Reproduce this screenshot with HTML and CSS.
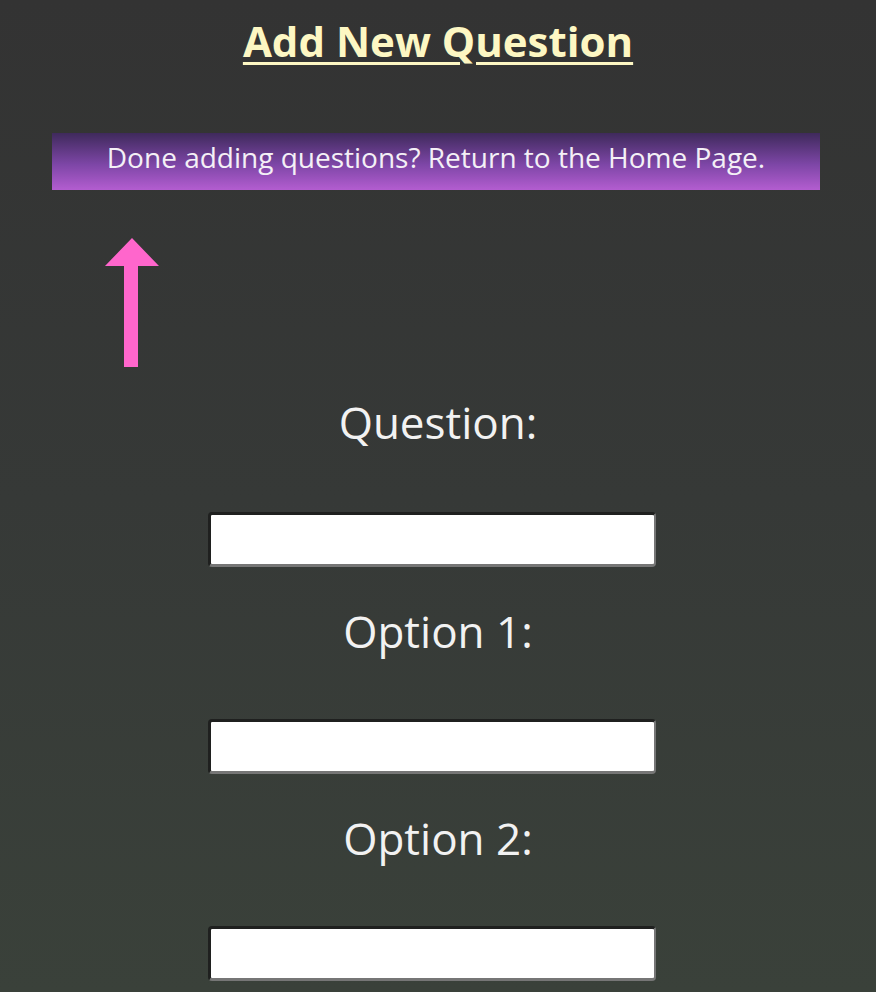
FILE: index.html
```html
<!DOCTYPE html>
<html>
<head>
<meta charset="utf-8">
<link rel="stylesheet" href="styles.css">
</head>
<body>
<h1 class="title">Add New Question</h1>
<div class="banner">Done adding questions? Return to the Home Page.</div>
<div class="arrow-wrap">
<svg class="arrow" width="56" height="130" viewBox="0 0 56 130"><polygon points="28,0 55,28 34,28 34,129 20,129 20,28 1,28" fill="#ff66cc"/></svg>
</div>
<form class="form">
<label class="label first">Question:</label>
<input class="field" type="text">
<label class="label">Option 1:</label>
<input class="field" type="text">
<label class="label">Option 2:</label>
<input class="field" type="text">
</form>
</body>
</html>
```
FILE: styles.css
```css
html, body {
  margin: 0;
  padding: 0;
}
body {
  min-height: 992px;
  background: linear-gradient(to bottom, #333333 0%, #363937 50%, #3a413a 100%);
  font-family: "Open Sans", sans-serif;
  color: #f2f2f2;
  overflow: hidden;
}
.title {
  margin: 0;
  padding-top: 16px;
  text-align: center;
  font-size: 42px;
  line-height: 50px;
  font-weight: 700;
  color: #fdf7c3;
  text-decoration: underline;
  text-decoration-thickness: 3px;
  text-underline-offset: 5px;
}
.banner {
  margin: 67px 56px 0 52px;
  height: 57px;
  padding-bottom: 10px;
  box-sizing: border-box;
  display: flex;
  align-items: center;
  justify-content: center;
  background: linear-gradient(to bottom, #3f2a5c 0%, #7d46a6 55%, #b35dd0 100%);
  font-size: 28px;
  color: #f4f0f6;
}
.arrow-wrap {
  margin: 48px 0 0 104px;
  height: 130px;
}
.arrow {
  display: block;
}
.form {
  display: flex;
  flex-direction: column;
  align-items: center;
}
.label {
  display: block;
  font-size: 44px;
  line-height: 60px;
  margin-top: 34px;
  margin-bottom: 58px;
  color: #f2f2f2;
}
.label.first {
  margin-top: 24px;
  margin-bottom: 60px;
}
.field {
  box-sizing: border-box;
  width: 448px;
  height: 55px;
  margin: 0 12px 0 0;
  background: #ffffff;
  border-style: solid;
  border-width: 3px 2px 3px 3px;
  border-color: #1f201f #767676 #767676 #1f201f;
  border-radius: 4px;
}
```
